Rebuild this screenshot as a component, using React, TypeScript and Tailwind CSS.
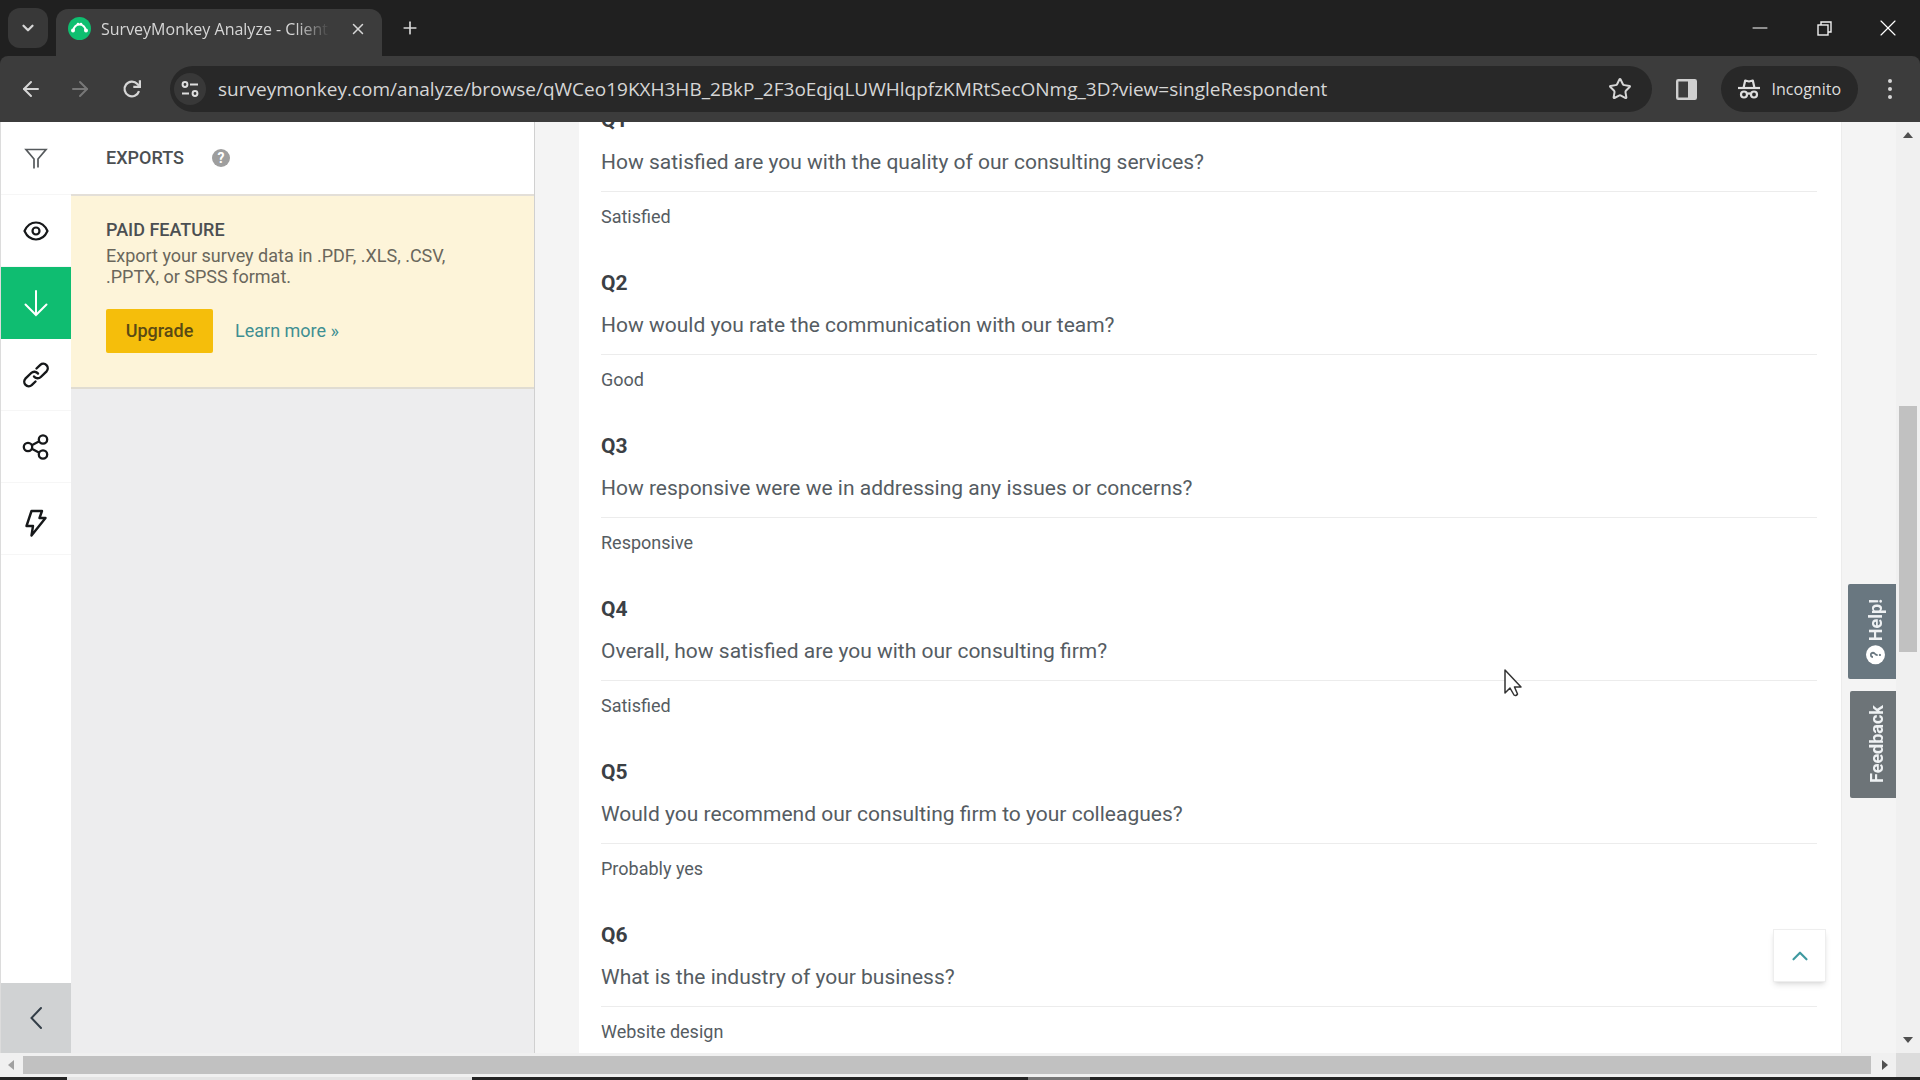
import { useState } from "react";
import type { ReactNode } from "react";
import { ArrowLeft, ArrowRight, ChevronDown, ChevronUp, Minus, Plus, Star, X } from "lucide-react";

const PAGE_URL =
  "surveymonkey.com/analyze/browse/qWCeo19KXH3HB_2BkP_2F3oEqjqLUWHlqpfzKMRtSecONmg_3D?view=singleRespondent";

const questions = [
  { id: "Q1", title: "How satisfied are you with the quality of our consulting services?", answer: "Satisfied" },
  { id: "Q2", title: "How would you rate the communication with our team?", answer: "Good" },
  { id: "Q3", title: "How responsive were we in addressing any issues or concerns?", answer: "Responsive" },
  { id: "Q4", title: "Overall, how satisfied are you with our consulting firm?", answer: "Satisfied" },
  { id: "Q5", title: "Would you recommend our consulting firm to your colleagues?", answer: "Probably yes" },
  { id: "Q6", title: "What is the industry of your business?", answer: "Website design" },
];

function SurveyMonkeyIcon() {
  return (
    <svg width="23" height="23" viewBox="0 0 23 23" className="shrink-0">
      <circle cx="11.5" cy="11.5" r="11.5" fill="#0fbf70" />
      <path d="M5.5 13.5a6 6 0 0 1 12 0" fill="none" stroke="#fff" strokeWidth="2" />
      <circle cx="5" cy="13.5" r="2" fill="#fff" />
      <circle cx="18" cy="13.5" r="2" fill="#fff" />
      <circle cx="10" cy="7" r="1.3" fill="#fff" />
      <circle cx="13" cy="7" r="1.3" fill="#fff" />
    </svg>
  );
}

function ReloadIcon() {
  return (
    <svg width="20" height="20" viewBox="0 0 20 20" fill="none" stroke="currentColor" strokeWidth="2.2">
      <path d="M17 12.200A7.400 7.400 0 1 1 15.400 5l1.600 1.800" />
      <path d="M17.900 1.200v6.600h-6.600" />
    </svg>
  );
}

function SiteSettingsIcon() {
  return (
    <svg width="18" height="16" viewBox="0 0 18 16" fill="none" stroke="#dedede" strokeWidth="2">
      <circle cx="4" cy="3.5" r="2.4" />
      <path d="M9 3.5h8M1 12.5h7" />
      <circle cx="14" cy="12.5" r="2.4" />
    </svg>
  );
}

function SidePanelIcon() {
  return (
    <svg width="21" height="21" viewBox="0 0 21 21">
      <rect x="1.2" y="1.2" width="18.6" height="18.6" rx="1" fill="none" stroke="#cfcfcf" strokeWidth="2.4" />
      <rect x="12" y="1" width="8" height="19" fill="#cfcfcf" />
    </svg>
  );
}

function IncognitoIcon() {
  return (
    <svg width="22" height="20" viewBox="0 0 22 20" fill="none" stroke="#dedede" strokeWidth="2.2">
      <path d="M0 9h22" />
      <path d="M5.5 9l1.700-7.500 3.800 1 3.800-1L16.500 9" strokeLinejoin="round" />
      <circle cx="6" cy="15.500" r="3" />
      <circle cx="16" cy="15.500" r="3" />
      <path d="M9 15q2-1.200 4 0" />
    </svg>
  );
}

function RestoreIcon() {
  return (
    <svg width="15" height="15" viewBox="0 0 15 15" fill="none" stroke="#f0f0f0" strokeWidth="1.4">
      <rect x="1" y="4" width="10" height="10" />
      <path d="M4 4V1h10v10h-3" />
    </svg>
  );
}

function FilterIcon() {
  return (
    <svg width="24" height="24" viewBox="0 0 24 24" fill="none" stroke="#55595c" strokeWidth="1.7">
      <path d="M10 21.500V12L2 2.500h20L14 12v8.500" />
    </svg>
  );
}

function EyeIcon() {
  return (
    <svg width="26" height="22" viewBox="0 0 26 22" fill="none" stroke="#16181a" strokeWidth="2.2" strokeLinejoin="round">
      <path d="M1.500 11C4 5.500 8 2.500 13 2.500S22 5.500 24.500 11C22 16.500 18 19.500 13 19.500S4 16.500 1.500 11z" />
      <circle cx="13" cy="11" r="3.500" />
    </svg>
  );
}

function DownloadArrowIcon() {
  return (
    <svg width="26" height="28" viewBox="0 0 26 28" fill="none" stroke="currentColor" strokeWidth="2" strokeLinecap="round">
      <path d="M13 2v24M2.500 15.500L13 26l10.500-10.500" />
    </svg>
  );
}

function LinkIcon() {
  return (
    <svg width="28" height="28" viewBox="0 0 28 28" fill="none" stroke="#16181a" strokeWidth="2.4" strokeLinecap="round">
      <path d="M14.500 7.500l3.800-3.600a4.500 4.500 0 0 1 6.300 6.400l-5.800 5.700a4.500 4.500 0 0 1-6.800-.500" />
      <path d="M13.500 20.500l-3.800 3.600a4.500 4.500 0 0 1-6.300-6.400l5.800-5.700a4.500 4.500 0 0 1 6.800.500" />
    </svg>
  );
}

function ShareIcon() {
  return (
    <svg width="28" height="26" viewBox="0 0 28 26" fill="none" stroke="#16181a" strokeWidth="2.3">
      <circle cx="6" cy="13" r="4.200" />
      <circle cx="21" cy="5.500" r="4.200" />
      <circle cx="21" cy="20.500" r="4.200" />
      <path d="M9.800 11.200l7.500-3.900M9.800 14.800l7.500 3.900" />
    </svg>
  );
}

function BoltIcon() {
  return (
    <svg width="22" height="28" viewBox="0 0 22 28" fill="none" stroke="#16181a" strokeWidth="2.4" strokeLinejoin="round">
      <path d="M6.500 2H17l-2.500 7H20.500L6.500 26.500 8 17H1.500z" />
    </svg>
  );
}

function CollapseIcon() {
  return (
    <svg width="14" height="24" viewBox="0 0 14 24" fill="none" stroke="currentColor" strokeWidth="2" strokeLinecap="round">
      <path d="M12 2L2.500 12 12 22" />
    </svg>
  );
}

function IncognitoBadge() {
  return (
    <button type="button" className="flex h-[46px] items-center gap-3 rounded-full bg-[#282828] px-[17px] text-base text-[#dedede]">
      <IncognitoIcon />
      Incognito
    </button>
  );
}

function BrowserHeader() {
  const [url, setUrl] = useState(PAGE_URL);

  return (
    <header className="shrink-0 bg-[#202020] font-['Open_Sans',sans-serif] text-[#d6d6d6]">
      <div className="flex h-14 items-end">
        <button type="button" aria-label="Search tabs" className="mb-2 ml-2 flex size-10 items-center justify-center rounded-xl bg-[#383838]">
          <ChevronDown size={18} strokeWidth={3} />
        </button>
        <div className="ml-2 flex h-[47px] w-[326px] items-center rounded-t-xl bg-[#3c3c3c] px-3 pb-2">
          <SurveyMonkeyIcon />
          <span className="ml-[10px] flex-1 overflow-hidden mask-r-from-85% text-base whitespace-nowrap">
            SurveyMonkey Analyze - Client
          </span>
          <button type="button" aria-label="Close tab" className="ml-4 flex size-6 items-center justify-center">
            <X size={18} strokeWidth={2} />
          </button>
        </div>
        <button type="button" aria-label="New tab" className="mb-4 ml-4 flex size-6 items-center justify-center">
          <Plus size={20} strokeWidth={2} />
        </button>
        <div className="ml-auto flex h-14 items-center">
          <button type="button" aria-label="Minimize" className="flex h-full w-16 items-center justify-center">
            <Minus size={24} strokeWidth={1} className="text-white" />
          </button>
          <button type="button" aria-label="Restore" className="flex h-full w-16 items-center justify-center">
            <RestoreIcon />
          </button>
          <button type="button" aria-label="Close" className="flex h-full w-16 items-center justify-center">
            <X size={28} strokeWidth={1} className="text-white" />
          </button>
        </div>
      </div>
      <div className="flex h-[66px] items-center rounded-t-lg bg-[#3c3c3c] pr-[18px]">
        <button type="button" aria-label="Back" className="flex w-[62px] justify-center">
          <ArrowLeft size={24} strokeWidth={2} />
        </button>
        <button type="button" aria-label="Forward" className="flex w-9 justify-center text-[#777]">
          <ArrowRight size={24} strokeWidth={2} />
        </button>
        <button type="button" aria-label="Reload" className="flex w-[68px] justify-center">
          <ReloadIcon />
        </button>
        <div className="ml-1 flex h-[46px] flex-1 items-center rounded-full bg-[#282828] pr-5 pl-1">
          <button type="button" aria-label="Site information" className="flex size-8 items-center justify-center rounded-full bg-[#383838]">
            <SiteSettingsIcon />
          </button>
          <input
            type="text"
            aria-label="Address"
            value={url}
            onChange={(e) => setUrl(e.target.value)}
            className="ml-3 flex-1 bg-transparent text-[19px] outline-none"
          />
          <button type="button" aria-label="Bookmark this tab">
            <Star size={24} strokeWidth={2} />
          </button>
        </div>
        <button type="button" aria-label="Side panel" className="mx-6">
          <SidePanelIcon />
        </button>
        <IncognitoBadge />
        <button type="button" aria-label="Menu" className="ml-5 flex w-6 flex-col items-center gap-1">
          <span className="size-1 rounded-full bg-[#d6d6d6]" />
          <span className="size-1 rounded-full bg-[#d6d6d6]" />
          <span className="size-1 rounded-full bg-[#d6d6d6]" />
        </button>
      </div>
    </header>
  );
}

function RailButton({ label, active, children }: { label: string; active?: boolean; children: ReactNode }) {
  return (
    <button
      type="button"
      aria-label={label}
      className={
        active
          ? "flex h-18 items-center justify-center bg-[#0fbd71] text-white"
          : "flex h-18 items-center justify-center border-b border-[#f6f6f6] text-[#16181a]"
      }
    >
      {children}
    </button>
  );
}

function Rail() {
  return (
    <nav className="flex w-[71px] shrink-0 flex-col border-l border-[#dcdcdc] bg-white pt-px">
      <RailButton label="Filter"><FilterIcon /></RailButton>
      <RailButton label="Show"><EyeIcon /></RailButton>
      <RailButton label="Export" active><DownloadArrowIcon /></RailButton>
      <RailButton label="Link"><LinkIcon /></RailButton>
      <RailButton label="Share"><ShareIcon /></RailButton>
      <RailButton label="Integrations">
        <span className="pt-2"><BoltIcon /></span>
      </RailButton>
      <button type="button" aria-label="Collapse sidebar" className="mt-auto flex h-[70px] items-center justify-center bg-[#d0d2d3] text-[#333e48]">
        <CollapseIcon />
      </button>
    </nav>
  );
}

function ExportsPanel() {
  return (
    <aside className="flex w-[464px] shrink-0 flex-col border-r border-[#d0d0d0] bg-[#ededee] text-lg text-[#4b4f52]">
      <div className="flex h-[74px] items-center gap-7 border-b-2 border-[#e3dfd8] bg-white pl-[35px]">
        <h1 className="font-medium">EXPORTS</h1>
        <button type="button" aria-label="About exports" className="flex size-[18px] items-center justify-center rounded-full bg-[#9e9e9e] text-sm font-bold text-white">
          ?
        </button>
      </div>
      <section className="border-b-2 border-[#e0dcd2] bg-[#fdf4d9] pt-5 pr-12 pb-[34px] pl-[35px]">
        <h2 className="leading-7 font-medium">PAID FEATURE</h2>
        <p className="leading-[21px] mt-px text-[#6a675c]">
          Export your survey data in .PDF, .XLS, .CSV, .PPTX, or SPSS format.
        </p>
        <div className="mt-[22px] flex items-center gap-[22px]">
          <button type="button" className="h-11 w-[107px] rounded-xs bg-[#f5be0b] font-medium text-[#5a4a14]">
            Upgrade
          </button>
          <a href="#learn-more" className="text-[#3f8f92]">Learn more »</a>
        </div>
      </section>
    </aside>
  );
}

function Responses() {
  return (
    <main className="flex-1 overflow-hidden bg-[#f4f4f4] pr-[54px] pl-11">
      <div className="h-full overflow-hidden border-r border-[#ececec] bg-white pr-6 pl-[22px]">
        <div className="-mt-[14px] flex flex-col">
          {questions.map((q) => (
            <article key={q.id} className="pb-[42px] text-[#555c62]">
              <h3 className="text-[21px] leading-6 font-bold text-[#3b4045]">{q.id}</h3>
              <p className="mt-[18px] border-b border-[#ececec] pb-[17px] text-[21px] leading-6">{q.title}</p>
              <p className="mt-[13px] text-lg leading-6">{q.answer}</p>
            </article>
          ))}
        </div>
      </div>
    </main>
  );
}

function FloatingActions() {
  return (
    <>
      <button type="button" className="absolute top-[462px] right-0 flex h-[95px] w-12 items-center justify-center rounded-l-xs bg-[#697780] pl-2 text-lg font-bold text-[#eef1f3]">
        <span className="flex rotate-180 items-center gap-1 [writing-mode:vertical-rl]">
          <span className="flex size-[19px] items-center justify-center rounded-full bg-white text-sm text-[#697780]">?</span>
          Help!
        </span>
      </button>
      <button type="button" className="absolute top-[569px] right-0 flex h-[107px] w-[46px] items-center justify-center rounded-l-xs bg-[#6d7478] pl-2 text-lg font-bold text-[#eef1f3]">
        <span className="rotate-180 [writing-mode:vertical-rl]">Feedback</span>
      </button>
      <button type="button" aria-label="Back to top" className="absolute right-[70px] bottom-[71px] flex size-[53px] items-center justify-center border border-[#eee] bg-white text-[#3f9aa0] shadow-md">
        <ChevronUp size={26} strokeWidth={2} />
      </button>
    </>
  );
}

function VerticalScrollbar() {
  return (
    <div className="flex w-6 shrink-0 flex-col items-center justify-between bg-[#f0f0f0] py-[10px]">
      <svg width="10" height="6" viewBox="0 0 10 6"><path d="M0 6l5-6 5 6z" fill="#505050" /></svg>
      <div className="flex w-full flex-1 flex-col px-[3px] pt-[268px]">
        <div className="h-[246px] bg-[#c1c1c1]" />
      </div>
      <svg width="10" height="6" viewBox="0 0 10 6"><path d="M0 0l5 6 5-6z" fill="#505050" /></svg>
    </div>
  );
}

function HorizontalScrollbar() {
  return (
    <div className="flex h-6 shrink-0 bg-[#f0f0f0]">
      <div className="flex flex-1 items-center">
        <svg width="6" height="10" viewBox="0 0 6 10" className="mr-[9px] ml-2"><path d="M6 0L0 5l6 5z" fill="#a0a0a0" /></svg>
        <div className="h-[18px] flex-1 bg-[#c1c1c1]" />
        <svg width="6" height="10" viewBox="0 0 6 10" className="mr-2 ml-[11px]"><path d="M0 0l6 5-6 5z" fill="#505050" /></svg>
      </div>
      <div className="w-6 bg-[#dcdcdc]" />
    </div>
  );
}

// the page overlaps the taskbar by a thin strip at the bottom
function TaskbarEdge() {
  return (
    <div className="flex h-[3px] shrink-0 bg-[#242424]">
      <div className="ml-[67px] w-[405px] bg-[#e4e4e4]" />
      <div className="ml-[556px] w-[62px] bg-[#777]" />
    </div>
  );
}

function MouseCursor() {
  return (
    <svg width="18" height="28" viewBox="0 0 18 28" className="pointer-events-none absolute top-[669px] left-[1504px]">
      <path d="M1 1v23l5-5 4 7q2 1.500 3.500-1L10.500 18H17z" fill="#fff" stroke="#333" strokeWidth="1.5" strokeLinejoin="round" />
    </svg>
  );
}

export default function App() {
  return (
    <div className="relative flex h-screen flex-col overflow-hidden bg-white font-[Roboto,sans-serif]">
      <BrowserHeader />
      <div className="flex min-h-0 flex-1">
        <div className="relative flex min-w-0 flex-1">
          <Rail />
          <ExportsPanel />
          <Responses />
          <FloatingActions />
        </div>
        <VerticalScrollbar />
      </div>
      <HorizontalScrollbar />
      <TaskbarEdge />
      <MouseCursor />
    </div>
  );
}
